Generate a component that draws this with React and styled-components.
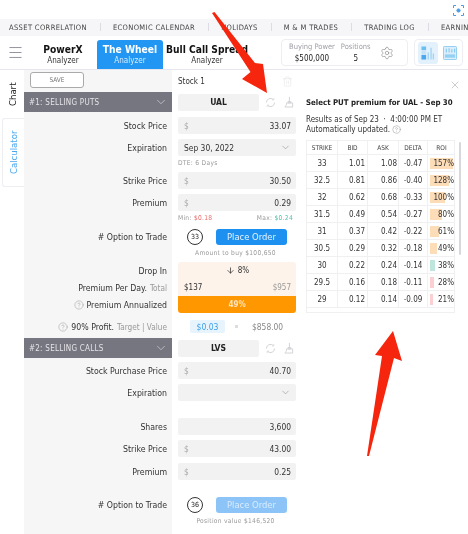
import React from "react";
import styled, { createGlobalStyle } from "styled-components";
import { ArrowDown, ChevronDown, CircleHelp, Menu, Settings, Trash2, X } from "lucide-react";

const GlobalStyle = createGlobalStyle`
    html, body {
        margin: 0;
        padding: 0;
        background: #fff;
    }
    body {
        font-family: "DejaVu Sans", "Noto Sans", sans-serif;
        font-stretch: condensed;
        color: #333;
    }
`;

const Page = styled.div`
    position: relative;
    width: 468px;
    height: 534px;
    overflow: hidden;
    background: #fff;
    filter: blur(0.35px);
`;

const TopStrip = styled.div`
    height: 19px;
    display: flex;
    justify-content: flex-end;
    align-items: flex-start;
    padding: 4px 3px 0 0;
    box-sizing: border-box;
`;

const Focus = styled.div`
    width: 13px;
    height: 13px;
    border-radius: 50%;
    color: #4a9be8;
    display: flex;
`;

const NavBar = styled.nav`
    height: 17px;
    background: #f6f6f9;
    display: flex;
    align-items: center;
    padding-left: 9px;
    white-space: nowrap;
`;

const NavItem = styled.span`
    font-size: 7.5px;
    letter-spacing: 0.36px;
    color: #444;
    &:not(:last-child)::after {
        content: "";
        display: inline-block;
        width: 1px;
        height: 8px;
        background: #dcdce2;
        margin: 0 12px 0 13px;
        vertical-align: -1px;
    }
`;

const Header = styled.header`
    height: 33px;
    display: flex;
    align-items: flex-end;
    border-bottom: 1px solid #e6e6ee;
`;

const Burger = styled.div`
    width: 30px;
    height: 33px;
    display: flex;
    align-items: center;
    justify-content: center;
    color: #8a8a96;
`;

const Tab = styled.div`
    width: ${(p) => p.$w}px;
    height: 29px;
    margin-left: ${(p) => p.$ml || 0}px;
    display: flex;
    flex-direction: column;
    align-items: center;
    justify-content: center;
    border-radius: 3px 3px 0 0;
    color: ${(p) => (p.$active ? "#fff" : "#111")};
    background: ${(p) => (p.$active ? "#2196f3" : "transparent")};
    white-space: nowrap;
`;

const TabTitle = styled.span`
    font-size: 10.2px;
    font-weight: 700;
    line-height: 13px;
`;

const TabSub = styled.span`
    font-size: 8px;
    line-height: 10px;
    color: ${(p) => (p.$active ? "#d6ecff" : "#333")};
`;

const Power = styled.div`
    width: 127px;
    height: 27px;
    margin: 0 0 3px 30px;
    box-sizing: border-box;
    border: 1px solid #eeeef2;
    border-radius: 4px;
    display: flex;
    align-items: center;
    padding-left: 7px;
    color: #a0a0a8;
`;

const PowerCol = styled.div`
    display: flex;
    flex-direction: column;
    align-items: center;
    margin-right: ${(p) => p.$mr}px;
    font-size: 7.5px;
    line-height: 12px;
    strong {
        font-weight: 400;
        color: #222;
        font-size: 8px;
    }
`;

const ViewBox = styled.div`
    width: 49px;
    height: 27px;
    margin: 0 0 3px 6px;
    box-sizing: border-box;
    border: 1px solid #eeeef2;
    border-radius: 4px;
    display: flex;
    align-items: center;
    padding-left: 3px;
    gap: 2px;
`;

const ViewBtn = styled.div`
    width: 20px;
    height: 22px;
    border-radius: 3px;
    display: flex;
    align-items: center;
    justify-content: center;
    background: ${(p) => (p.$on ? "#e3f1fd" : "transparent")};
`;

const Body = styled.div`
    display: flex;
    height: 464px;
`;

const Rail = styled.aside`
    width: 24px;
    flex-shrink: 0;
    padding-top: 7px;
`;

const RailTab = styled.div`
    writing-mode: vertical-rl;
    transform: rotate(180deg);
    display: flex;
    align-items: center;
    justify-content: center;
    height: ${(p) => p.$h}px;
    margin-top: ${(p) => p.$mt || 0}px;
    margin-left: ${(p) => (p.$boxed ? 2 : 0)}px;
    width: ${(p) => (p.$boxed ? 22 : 24)}px;
    font-size: 9.5px;
    color: ${(p) => (p.$boxed ? "#4aa8f0" : "#222")};
    box-sizing: border-box;
    background: #fff;
    border: ${(p) => (p.$boxed ? "1px solid #eeeef2" : "none")};
    border-left: none;
    border-radius: 0 3px 3px 0;
`;

const Form = styled.section`
    width: 272px;
    flex-shrink: 0;
    background: linear-gradient(to right, #f6f6f6 148px, #fff 148px);
`;

const Row = styled.div`
    display: grid;
    grid-template-columns: 148px 124px;
    align-items: ${(p) => p.$align || "center"};
    margin-top: ${(p) => p.$mt || 0}px;
    height: ${(p) => p.$h || 17}px;
`;

const Label = styled.div`
    text-align: right;
    padding-right: 5px;
    font-size: 8.7px;
    color: #333;
    white-space: nowrap;
    display: flex;
    justify-content: flex-end;
    align-items: center;
    gap: 3px;
`;

const Muted = styled.span`
    color: #999;
    font-size: ${(p) => p.$size || 8}px;
`;

const Cell = styled.div`
    padding: 0 0 0 6px;
    box-sizing: border-box;
    display: flex;
    align-items: center;
    height: ${(p) => (p.$fill ? "100%" : "auto")};
`;

const SaveBtn = styled.button`
    display: block;
    width: 54px;
    height: 16px;
    margin: 2px 0 0 6px;
    padding: 0;
    background: #fff;
    border: 1px solid #aaa;
    border-radius: 3px;
    font: inherit;
    font-size: 6.5px;
    color: #777;
`;

const StockHead = styled.div`
    display: flex;
    align-items: center;
    justify-content: space-between;
    padding: 6px 3px 0 6px;
    font-size: 8px;
    color: #333;
    svg {
        color: #ddd;
    }
`;

const Section = styled.div`
    height: 20px;
    background: #767680;
    color: #e4e4e8;
    font-size: 8px;
    letter-spacing: 0.25px;
    display: flex;
    align-items: center;
    justify-content: space-between;
    padding: 0 4px 0 5px;
`;

const Field = styled.div`
    width: 118px;
    height: 17px;
    box-sizing: border-box;
    background: #f2f2f2;
    border-radius: 2px;
    display: flex;
    align-items: center;
    justify-content: space-between;
    padding: 0 5px 0 6px;
    font-size: 8.4px;
    color: #333;
    svg {
        color: #888;
    }
`;

const Dollar = styled.span`
    color: #aaa;
`;

const Ticker = styled.div`
    width: 81px;
    height: 17px;
    background: #f2f2f2;
    border-radius: 2px;
    display: flex;
    align-items: center;
    justify-content: center;
    font-size: 8.5px;
    font-weight: 700;
    color: #222;
`;

const TickerTools = styled.div`
    display: flex;
    align-items: center;
    gap: 7px;
    margin-left: 6px;
    color: #d0d0d4;
`;

const Hint = styled.div`
    font-size: 6.6px;
    letter-spacing: 0.3px;
    color: #999;
    padding-left: 6px;
    width: 124px;
    box-sizing: border-box;
    display: flex;
    justify-content: ${(p) => (p.$between ? "space-between" : "flex-start")};
    padding-right: 3px;
`;

const CenterHint = styled(Hint)`
    justify-content: center;
    padding-left: 6px;
`;

const MinMax = styled.span`
    color: ${(p) => p.$color};
`;

const Count = styled.div`
    width: 16px;
    height: 16px;
    box-sizing: border-box;
    margin-left: 9px;
    border: 1px solid #333;
    border-radius: 50%;
    font-size: 7px;
    color: #222;
    display: flex;
    align-items: center;
    justify-content: center;
`;

const OrderBtn = styled.button`
    width: 71px;
    height: 16px;
    margin-left: 13px;
    padding: 0;
    border: none;
    border-radius: 3px;
    background: ${(p) => (p.$faded ? "#8cc4f8" : "#1e90f0")};
    color: ${(p) => (p.$faded ? "#d8ecff" : "#e6f3ff")};
    font: inherit;
    font-size: 9.4px;
`;

const DropTop = styled.div`
    width: 118px;
    background: #fdf3ea;
    border-radius: ${(p) => (p.$first ? "3px 3px 0 0" : "0")};
    height: 100%;
    display: flex;
    align-items: center;
    justify-content: ${(p) => (p.$between ? "space-between" : "center")};
    padding: 0 5px 0 6px;
    box-sizing: border-box;
    font-size: 8px;
    color: #333;
    gap: 3px;
`;

const OrangeBar = styled.div`
    width: 118px;
    height: 17px;
    background: #ff9800;
    border-radius: 0 0 3px 3px;
    color: #ffe3b8;
    font-size: 8px;
    font-weight: 700;
    display: flex;
    align-items: center;
    justify-content: center;
`;

const ProfitChip = styled.div`
    width: 35px;
    height: 13px;
    margin-left: 12px;
    background: #e8f4fd;
    border-radius: 2px;
    color: #3a9eea;
    font-size: 8.5px;
    display: flex;
    align-items: center;
    justify-content: center;
`;

const Dot = styled.span`
    width: 3px;
    height: 3px;
    background: #ddd;
    margin-left: 10px;
`;

const ProfitValue = styled.span`
    font-size: 8.4px;
    color: #888;
    margin-left: 14px;
`;

const Panel = styled.section`
    flex: 1;
    padding-left: 10px;
    display: flex;
    flex-direction: column;
`;

const CloseRow = styled.div`
    height: 21px;
    display: flex;
    justify-content: flex-end;
    align-items: flex-end;
    padding-right: 7px;
    color: #aaa;
`;

const PanelTitle = styled.div`
    margin-top: 6px;
    font-size: 7.8px;
    font-weight: 700;
    line-height: 12px;
    white-space: nowrap;
    color: #222;
`;

const PanelNote = styled.div`
    margin-top: 6px;
    font-size: 8px;
    line-height: 10px;
    color: #333;
    svg {
        color: #777;
        vertical-align: -2px;
        margin-left: 2px;
    }
`;

const TableWrap = styled.div`
    display: flex;
    margin-top: 5px;
    align-items: flex-start;
`;

const Table = styled.div`
    width: 149px;
    height: 173px;
    overflow: hidden;
    border: 1px solid #f0f0f3;
    box-sizing: border-box;
`;

const TRow = styled.div`
    display: grid;
    grid-template-columns: 31px 30px 31px 29px 27px;
    height: ${(p) => p.$h || 17}px;
    border-bottom: 1px solid #f0f0f3;
    box-sizing: border-box;
`;

const TCell = styled.div`
    border-right: 1px solid #f0f0f3;
    display: flex;
    align-items: center;
    justify-content: ${(p) => p.$justify || "center"};
    padding-right: ${(p) => p.$pr || 0}px;
    font-size: ${(p) => (p.$head ? 6.5 : 8)}px;
    color: ${(p) => (p.$head ? "#444" : "#333")};
    &:last-child {
        border-right: none;
    }
`;

const RoiCell = styled(TCell)`
    justify-content: flex-end;
    padding-right: 1px;
    background: linear-gradient(${(p) => p.$color}, ${(p) => p.$color}) no-repeat 2px center / ${(p) => p.$bar}px 11px;
`;

const Scroll = styled.div`
    width: 2px;
    height: 113px;
    margin: 2px 0 0 4px;
    background: #d8d8dc;
    border-radius: 1px;
`;

const ArrowLayer = styled.svg`
    position: absolute;
    inset: 0;
    pointer-events: none;
`;

const NAV = ["ASSET CORRELATION", "ECONOMIC CALENDAR", "HOLIDAYS", "M & M TRADES", "TRADING LOG", "EARNINGS"];

const PEACH = "#fddcb8";
const GREEN = "#bfe6dc";
const PINK = "#fbd0d3";

const OPTIONS = [
    ["33", "1.01", "1.08", "-0.47", "157%", 23, PEACH],
    ["32.5", "0.81", "0.86", "-0.40", "128%", 19, PEACH],
    ["32", "0.62", "0.68", "-0.33", "100%", 15, PEACH],
    ["31.5", "0.49", "0.54", "-0.27", "80%", 12, PEACH],
    ["31", "0.37", "0.42", "-0.22", "61%", 9, PEACH],
    ["30.5", "0.29", "0.32", "-0.18", "49%", 7, PEACH],
    ["30", "0.22", "0.24", "-0.14", "38%", 5, GREEN],
    ["29.5", "0.16", "0.18", "-0.11", "28%", 4, PINK],
    ["29", "0.12", "0.14", "-0.09", "21%", 3, PINK],
];

function RefreshIcon() {
    return (
        <svg width="11" height="11" viewBox="0 0 12 12" fill="none" stroke="currentColor" strokeWidth="1">
            <path d="M1.5 6a4.5 4.5 0 0 1 7.5-3.3M10.5 6a4.5 4.5 0 0 1-7.5 3.3" />
            <path d="M9.6 1v2.2H7.5M2.4 11V8.8h2.1" strokeWidth="0.7" />
        </svg>
    );
}

function BroomIcon() {
    return (
        <svg width="11" height="12" viewBox="0 0 12 13" fill="none" stroke="currentColor" strokeWidth="1">
            <path d="M7 1v5M5.5 6h3v1.5h-3zM4 7.5h6.5v4.5H2c1-1 2-2.5 2-4.5z" />
        </svg>
    );
}

function FocusIcon() {
    return (
        <svg width="13" height="13" viewBox="0 0 13 13" fill="none" stroke="currentColor" strokeWidth="1">
            <path d="M1.5 4V1.5H4M9 1.5h2.5V4M11.5 9v2.5H9M4 11.5H1.5V9" />
            <circle cx="6.5" cy="6.5" r="1.6" fill="currentColor" />
        </svg>
    );
}

function LayoutIcon() {
    return (
        <svg width="14" height="14" viewBox="0 0 15 15">
            <rect x="0.5" y="0.5" width="5" height="4" fill="#6cc0ee" />
            <rect x="0.5" y="5.5" width="5" height="3" fill="#c4e2f6" />
            <rect x="0.5" y="9.5" width="5" height="5" fill="#4aa8ec" />
            <path d="M7 14.5V7h1.5v7.5zM10 14.5V2h1.5v12.5zM12.5 14.5V8H14v6.5z" fill="#a4d4f2" />
        </svg>
    );
}

function GridIcon() {
    return (
        <svg width="14" height="14" viewBox="0 0 15 15">
            <rect x="0.5" y="0.5" width="14" height="14" rx="1" fill="#dceefb" stroke="#8ccaf0" />
            <path d="M3 7V3h1v4zM6 7V2.5h1V7zM9 7V3.5h1V7zM12 7V3h1v4z" fill="#74c0ee" />
            <rect x="2" y="9" width="11" height="3.5" fill="#94d0f2" />
        </svg>
    );
}

function Arrows() {
    return (
        <ArrowLayer width="468" height="534" viewBox="0 0 468 534">
            <polygon points="212,13 214.5,12 255,63 263,64 267,93 242,79 250.5,72" fill="#f5260d" />
            <polygon points="367,456 369,456 394,358 402,361 393,331 375,355 382,356" fill="#f5260d" />
        </ArrowLayer>
    );
}

export default function App() {
    return (
        <>
            <GlobalStyle />
            <Page>
                <TopStrip>
                    <Focus>
                        <FocusIcon />
                    </Focus>
                </TopStrip>
                <NavBar>
                    {NAV.map((item) => (
                        <NavItem key={item}>{item}</NavItem>
                    ))}
                </NavBar>
                <Header>
                    <Burger>
                        <Menu size={17} strokeWidth={1.3} />
                    </Burger>
                    <Tab $w={56} $ml={5}>
                        <TabTitle>PowerX</TabTitle>
                        <TabSub>Analyzer</TabSub>
                    </Tab>
                    <Tab $w={66} $ml={6} $active>
                        <TabTitle>The Wheel</TabTitle>
                        <TabSub $active>Analyzer</TabSub>
                    </Tab>
                    <Tab $w={88}>
                        <TabTitle>Bull Call Spread</TabTitle>
                        <TabSub>Analyzer</TabSub>
                    </Tab>
                    <Power>
                        <PowerCol $mr={6}>
                            Buying Power
                            <strong>$500,000</strong>
                        </PowerCol>
                        <PowerCol $mr={9}>
                            Positions
                            <strong>5</strong>
                        </PowerCol>
                        <Settings size={14} strokeWidth={1.1} color="#888" />
                    </Power>
                    <ViewBox>
                        <ViewBtn $on>
                            <LayoutIcon />
                        </ViewBtn>
                        <ViewBtn>
                            <GridIcon />
                        </ViewBtn>
                    </ViewBox>
                </Header>
                <Body>
                    <Rail>
                        <RailTab $h={34}>Chart</RailTab>
                        <RailTab $h={69} $mt={7} $boxed>
                            Calculator
                        </RailTab>
                    </Rail>
                    <Form>
                        <Row $h={22} $align="start">
                            <div>
                                <SaveBtn>SAVE</SaveBtn>
                            </div>
                            <StockHead>
                                Stock 1
                                <Trash2 size={11} strokeWidth={1} />
                            </StockHead>
                        </Row>
                        <Row $h={20}>
                            <Section>
                                #1: SELLING PUTS
                                <ChevronDown size={14} strokeWidth={1} />
                            </Section>
                            <Cell>
                                <Ticker>UAL</Ticker>
                                <TickerTools>
                                    <RefreshIcon />
                                    <BroomIcon />
                                </TickerTools>
                            </Cell>
                        </Row>
                        <Row $mt={5}>
                            <Label>Stock Price</Label>
                            <Cell>
                                <Field>
                                    <Dollar>$</Dollar>33.07
                                </Field>
                            </Cell>
                        </Row>
                        <Row $mt={5}>
                            <Label>Expiration</Label>
                            <Cell>
                                <Field>
                                    Sep 30, 2022
                                    <ChevronDown size={11} strokeWidth={1.2} />
                                </Field>
                            </Cell>
                        </Row>
                        <Row $h={11} $mt={1}>
                            <span />
                            <Hint>DTE: 6 Days</Hint>
                        </Row>
                        <Row $mt={4}>
                            <Label>Strike Price</Label>
                            <Cell>
                                <Field>
                                    <Dollar>$</Dollar>30.50
                                </Field>
                            </Cell>
                        </Row>
                        <Row $mt={5}>
                            <Label>Premium</Label>
                            <Cell>
                                <Field>
                                    <Dollar>$</Dollar>0.29
                                </Field>
                            </Cell>
                        </Row>
                        <Row $h={11} $mt={1}>
                            <span />
                            <Hint $between>
                                <span>
                                    Min: <MinMax $color="#ec6a6a">$0.18</MinMax>
                                </span>
                                <span>
                                    Max: <MinMax $color="#4fbfa8">$0.24</MinMax>
                                </span>
                            </Hint>
                        </Row>
                        <Row $mt={5}>
                            <Label># Option to Trade</Label>
                            <Cell>
                                <Count>33</Count>
                                <OrderBtn>Place Order</OrderBtn>
                            </Cell>
                        </Row>
                        <Row $h={11} $mt={2}>
                            <span />
                            <CenterHint>Amount to buy $100,650</CenterHint>
                        </Row>
                        <Row $mt={4}>
                            <Label>Drop In</Label>
                            <Cell $fill>
                                <DropTop $first>
                                    <ArrowDown size={9} />8%
                                </DropTop>
                            </Cell>
                        </Row>
                        <Row>
                            <Label>
                                Premium Per Day. <Muted $size={8.2}>Total</Muted>
                            </Label>
                            <Cell $fill>
                                <DropTop $between>
                                    <span>$137</span>
                                    <Muted>$957</Muted>
                                </DropTop>
                            </Cell>
                        </Row>
                        <Row>
                            <Label>
                                <CircleHelp size={10} strokeWidth={1} color="#888" />
                                Premium Annualized
                            </Label>
                            <Cell>
                                <OrangeBar>49%</OrangeBar>
                            </Cell>
                        </Row>
                        <Row $h={13} $mt={7}>
                            <Label>
                                <CircleHelp size={10} strokeWidth={1} color="#888" />
                                90% Profit. <Muted $size={8.2}>Target | Value</Muted>
                            </Label>
                            <Cell>
                                <ProfitChip>$0.03</ProfitChip>
                                <Dot />
                                <ProfitValue>$858.00</ProfitValue>
                            </Cell>
                        </Row>
                        <Row $h={20} $mt={5}>
                            <Section>
                                #2: SELLING CALLS
                                <ChevronDown size={14} strokeWidth={1} />
                            </Section>
                            <Cell>
                                <Ticker>LVS</Ticker>
                                <TickerTools>
                                    <RefreshIcon />
                                    <BroomIcon />
                                </TickerTools>
                            </Cell>
                        </Row>
                        <Row $mt={4}>
                            <Label>Stock Purchase Price</Label>
                            <Cell>
                                <Field>
                                    <Dollar>$</Dollar>40.70
                                </Field>
                            </Cell>
                        </Row>
                        <Row $mt={5}>
                            <Label>Expiration</Label>
                            <Cell>
                                <Field>
                                    <span />
                                    <ChevronDown size={11} strokeWidth={1.2} />
                                </Field>
                            </Cell>
                        </Row>
                        <Row $mt={17}>
                            <Label>Shares</Label>
                            <Cell>
                                <Field>
                                    <span />
                                    3,600
                                </Field>
                            </Cell>
                        </Row>
                        <Row $mt={5}>
                            <Label>Strike Price</Label>
                            <Cell>
                                <Field>
                                    <Dollar>$</Dollar>43.00
                                </Field>
                            </Cell>
                        </Row>
                        <Row $mt={6}>
                            <Label>Premium</Label>
                            <Cell>
                                <Field>
                                    <Dollar>$</Dollar>0.25
                                </Field>
                            </Cell>
                        </Row>
                        <Row $mt={16}>
                            <Label># Option to Trade</Label>
                            <Cell>
                                <Count>36</Count>
                                <OrderBtn $faded>Place Order</OrderBtn>
                            </Cell>
                        </Row>
                        <Row $h={11} $mt={2}>
                            <span />
                            <CenterHint>Position value $146,520</CenterHint>
                        </Row>
                    </Form>
                    <Panel>
                        <CloseRow>
                            <X size={12} strokeWidth={1.2} />
                        </CloseRow>
                        <PanelTitle>Select PUT premium for UAL - Sep 30</PanelTitle>
                        <PanelNote>
                            Results as of Sep 23 &nbsp;·&nbsp; 4:00:00 PM ET
                            <br />
                            Automatically updated.
                            <CircleHelp size={9} strokeWidth={1} />
                        </PanelNote>
                        <TableWrap>
                            <Table>
                                <TRow $h={14}>
                                    <TCell $head>STRIKE</TCell>
                                    <TCell $head>BID</TCell>
                                    <TCell $head>ASK</TCell>
                                    <TCell $head>DELTA</TCell>
                                    <TCell $head>ROI</TCell>
                                </TRow>
                                {OPTIONS.map(([strike, bid, ask, delta, roi, bar, color]) => (
                                    <TRow key={strike}>
                                        <TCell>{strike}</TCell>
                                        <TCell $justify="flex-end" $pr={2}>
                                            {bid}
                                        </TCell>
                                        <TCell $justify="flex-end" $pr={1}>
                                            {ask}
                                        </TCell>
                                        <TCell>{delta}</TCell>
                                        <RoiCell $bar={bar} $color={color}>
                                            {roi}
                                        </RoiCell>
                                    </TRow>
                                ))}
                            </Table>
                            <Scroll />
                        </TableWrap>
                    </Panel>
                </Body>
                <Arrows />
            </Page>
        </>
    );
}
